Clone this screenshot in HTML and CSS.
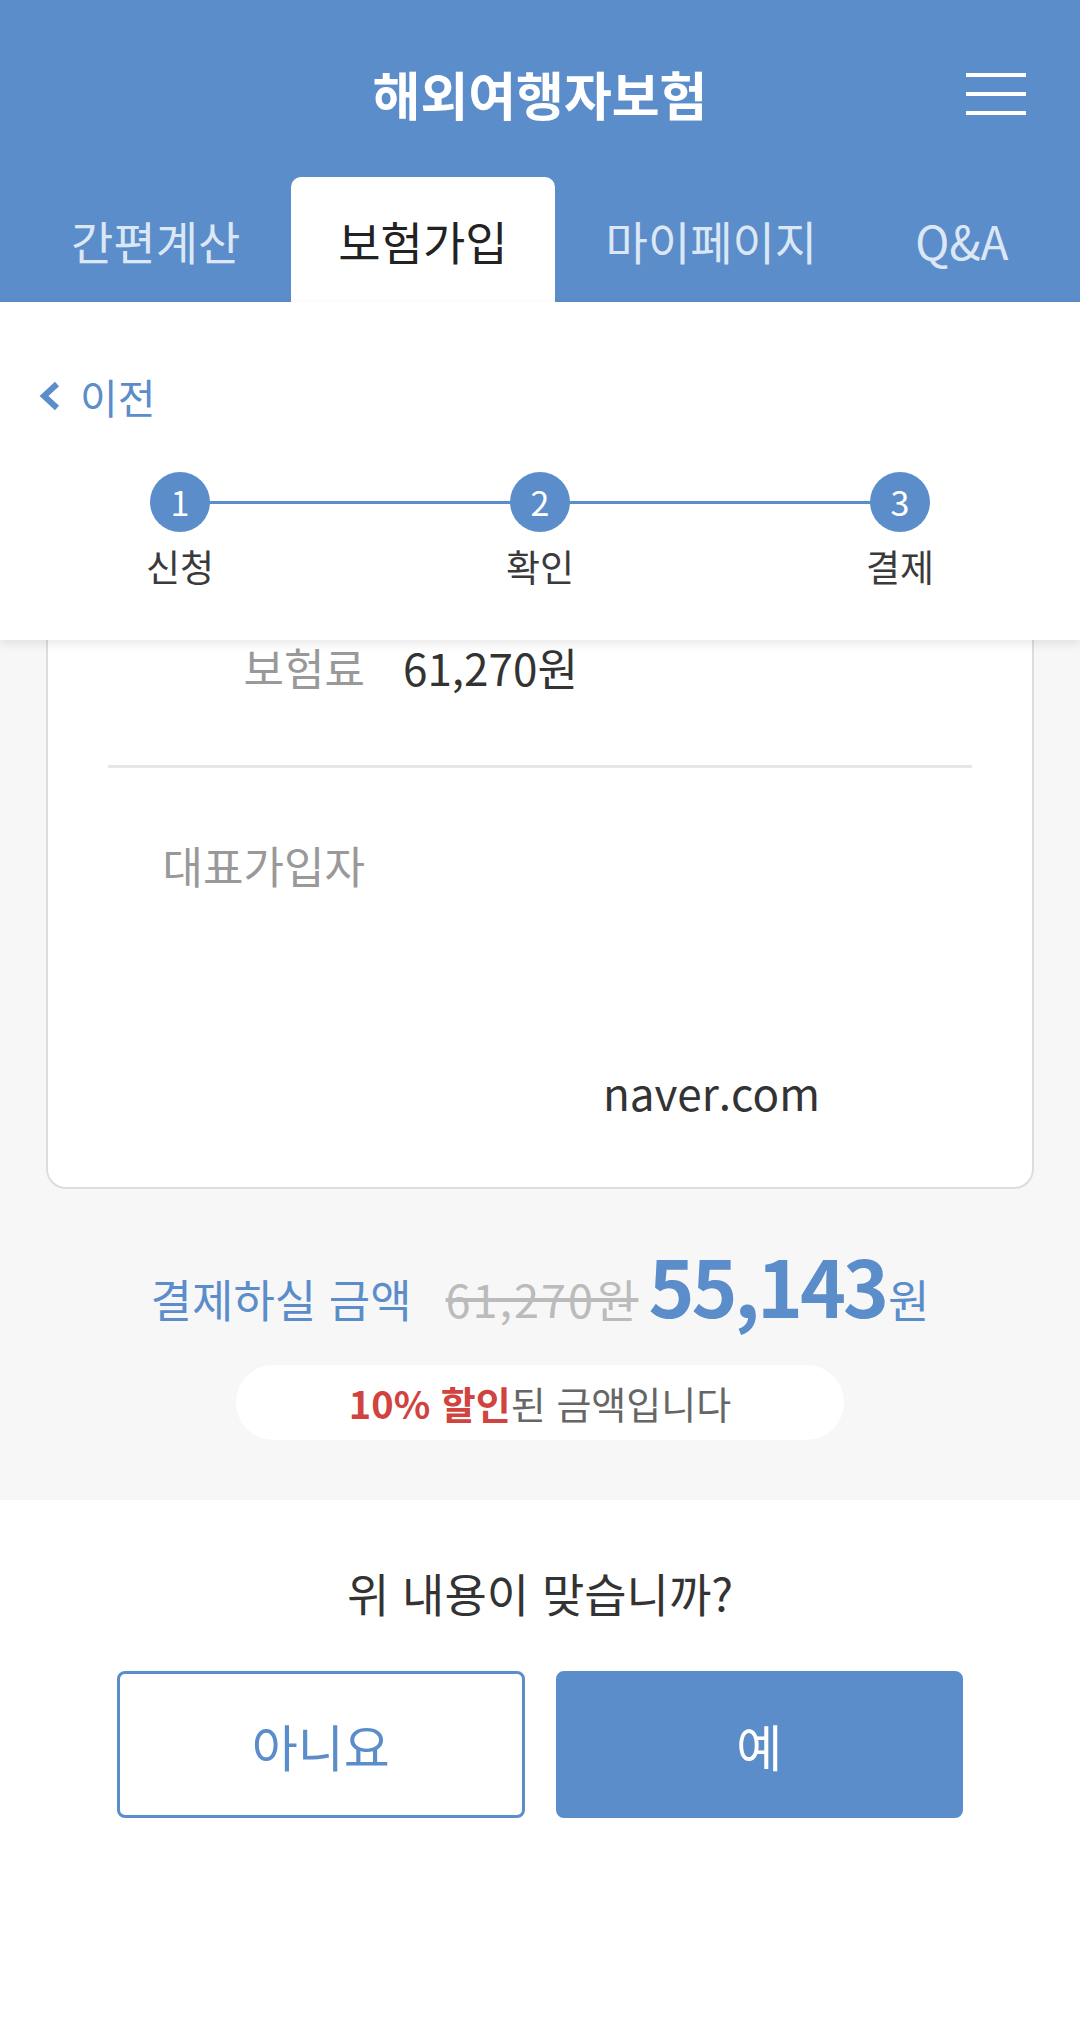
FILE: index.html
```html
<!DOCTYPE html>
<html lang="ko">
  <head>
    <meta charset="UTF-8" />
    <meta name="viewport" content="width=device-width, initial-scale=1.0" />
    <title>해외여행자보험</title>
    <link rel="stylesheet" href="styles.css">
  </head>
  <body>
    <header class="top">
      <div class="title-bar">
        <span></span>
        <h1 class="title">해외여행자보험</h1>
        <button class="menu" aria-label="메뉴">
          <span></span><span></span><span></span>
        </button>
      </div>
      <nav class="tabs">
        <a class="tab">간편계산</a>
        <a class="tab active">보험가입</a>
        <a class="tab">마이페이지</a>
        <a class="tab">Q&amp;A</a>
      </nav>
    </header>

    <section class="progress">
      <a class="back">
        <svg width="24" height="30" viewBox="0 0 24 30">
          <path d="M19 3 L6 15 L19 27" fill="none" stroke="#5b8dca" stroke-width="6" />
        </svg>
        이전
      </a>
      <ol class="steps">
        <li class="step"><span class="num">1</span><span class="label">신청</span></li>
        <li class="step"><span class="num">2</span><span class="label">확인</span></li>
        <li class="step"><span class="num">3</span><span class="label">결제</span></li>
      </ol>
    </section>

    <main class="content">
      <div class="card">
        <div class="row">
          <span class="key">보험료</span>
          <span class="val">61,270원</span>
        </div>
        <hr class="divider" />
        <div class="row">
          <span class="key">대표가입자</span>
          <span class="val"></span>
        </div>
        <div class="row email">
          <span class="key"></span>
          <span class="val">naver.com</span>
        </div>
      </div>

      <div class="total">
        <span class="total-label">결제하실 금액</span>
        <span class="old-price">61,270원</span>
        <span class="new-price">55,143</span><span class="won">원</span>
      </div>
      <div class="discount"><b>10% 할인</b>된 금액입니다</div>
    </main>

    <section class="confirm">
      <p class="question">위 내용이 맞습니까?</p>
      <div class="buttons">
        <button class="btn btn-no">아니요</button>
        <button class="btn btn-yes">예</button>
      </div>
    </section>
  </body>
</html>
```

FILE: styles.css
```css
body {
  margin: 0;
  font-family: "Noto Sans CJK KR", "Noto Sans", sans-serif;
  background-color: #fff;
  color: #333;
}

.top {
  background-color: #5b8dca;
}

.title-bar {
  display: grid;
  grid-template-columns: 1fr auto 1fr;
  align-items: center;
  height: 177px;
  box-sizing: border-box;
  padding-top: 10px;
}

.title {
  margin: 0;
  font-size: 52px;
  font-weight: bold;
  color: #fff;
}

.menu {
  justify-self: end;
  margin-right: 54px;
  width: 60px;
  padding: 0;
  border: none;
  background: none;
  display: flex;
  flex-direction: column;
  gap: 15px;
}

.menu span {
  display: block;
  height: 4px;
  background-color: #fff;
}

.tabs {
  display: flex;
  gap: 4px;
  height: 125px;
  padding-left: 24px;
}

.tab {
  display: flex;
  align-items: center;
  padding: 0 47px;
  font-size: 46px;
  color: #dce7f5;
}

.tab.active {
  background-color: #fff;
  color: #222;
  border-radius: 10px 10px 0 0;
}

.progress {
  position: relative;
  z-index: 1;
  height: 338px;
  box-sizing: border-box;
  padding-top: 64px;
  background-color: #fff;
  box-shadow: 0 4px 10px rgba(0, 0, 0, 0.09);
}

.back {
  display: flex;
  align-items: center;
  gap: 18px;
  height: 60px;
  padding-left: 38px;
  font-size: 41px;
  color: #5b8dca;
}

.steps {
  position: relative;
  display: grid;
  grid-template-columns: repeat(3, 1fr);
  margin: 46px 0 0;
  padding: 0;
  list-style: none;
}

.steps::before {
  content: "";
  position: absolute;
  left: 180px;
  right: 180px;
  top: 29px;
  height: 3px;
  background-color: #5b8dca;
}

.step {
  position: relative;
  display: flex;
  flex-direction: column;
  align-items: center;
}

.num {
  width: 60px;
  height: 60px;
  border-radius: 50%;
  background-color: #5b8dca;
  color: #fff;
  font-size: 34px;
  line-height: 60px;
  text-align: center;
}

.label {
  margin-top: 10px;
  font-size: 37px;
  line-height: 48px;
  color: #3a3a3a;
}

.content {
  background-color: #f7f7f7;
  padding-bottom: 60px;
}

.card {
  margin: 0 46px;
  padding-bottom: 68px;
  background-color: #fff;
  border: 2px solid #ddd;
  border-top: none;
  border-radius: 0 0 20px 20px;
}

.row {
  display: grid;
  grid-template-columns: 317px 1fr;
  font-size: 44px;
  line-height: 54px;
}

.row + .divider + .row {
  margin-top: 70px;
}

.key {
  text-align: right;
  color: #999;
}

.val {
  padding-left: 38px;
  color: #333;
}

.row.email {
  margin-top: 173px;
}

.row.email .val {
  padding-left: 238px;
}

.divider {
  margin: 71px 60px 0;
  border: none;
  height: 3px;
  background-color: #e6e6e6;
}

.total {
  display: flex;
  justify-content: center;
  align-items: baseline;
  margin-top: 39px;
  height: 90px;
  color: #5b8dca;
  font-size: 45px;
}

.old-price {
  margin-left: 34px;
  margin-right: 10px;
  color: #bbb;
  letter-spacing: 2px;
  text-decoration: line-through;
}

.new-price {
  font-size: 78px;
  font-weight: bold;
  letter-spacing: -3px;
}

.won {
  margin-left: 2px;
}

.discount {
  width: 608px;
  height: 75px;
  margin: 47px auto 0;
  border-radius: 38px;
  background-color: #fff;
  font-size: 38px;
  line-height: 75px;
  text-align: center;
  color: #666;
}

.discount b {
  color: #d0433f;
}

.confirm {
  padding-top: 62px;
  padding-bottom: 100px;
  text-align: center;
}

.question {
  margin: 0;
  font-size: 46px;
  line-height: 60px;
  color: #333;
}

.buttons {
  display: grid;
  grid-template-columns: 1fr 1fr;
  gap: 31px;
  margin: 49px 117px 0;
}

.btn {
  height: 147px;
  border-radius: 8px;
  font-family: inherit;
  font-size: 50px;
}

.btn-no {
  background-color: #fff;
  border: 3px solid #5b8dca;
  color: #5b8dca;
}

.btn-yes {
  background-color: #5b8dca;
  border: 3px solid #5b8dca;
  color: #fff;
}
```
